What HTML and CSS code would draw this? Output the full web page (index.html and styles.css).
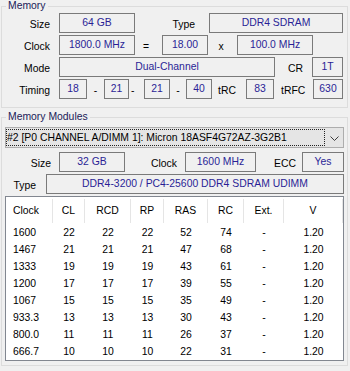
FILE: index.html
```html
<!DOCTYPE html>
<html>
<head>
<meta charset="utf-8">
<link rel="stylesheet" href="styles.css">
</head>
<body>
<fieldset class="grp mem">
  <legend>Memory</legend>
  <div class="row first">
    <span class="lbl l0">Size</span>
    <span class="val v-size">64 GB</span>
    <span class="lbl l-type">Type</span>
    <span class="val v-type">DDR4 SDRAM</span>
  </div>
  <div class="row">
    <span class="lbl l0">Clock</span>
    <span class="val v-size">1800.0 MHz</span>
    <span class="lbl eq">=</span>
    <span class="val v-mult">18.00</span>
    <span class="lbl x">x</span>
    <span class="val v-bus">100.0 MHz</span>
  </div>
  <div class="row">
    <span class="lbl l0">Mode</span>
    <span class="val v-mode">Dual-Channel</span>
    <span class="lbl l-cr">CR</span>
    <span class="val v-cr">1T</span>
  </div>
  <div class="row">
    <span class="lbl l0">Timing</span>
    <span class="val v-t1">18</span>
    <span class="lbl dash d1">-</span>
    <span class="val v-t2">21</span>
    <span class="lbl dash d2">-</span>
    <span class="val v-t3">21</span>
    <span class="lbl dash d3">-</span>
    <span class="val v-t3">40</span>
    <span class="lbl l-trc">tRC</span>
    <span class="val v-trc">83</span>
    <span class="lbl l-trfc">tRFC</span>
    <span class="val v-trfc">630</span>
  </div>
</fieldset>

<fieldset class="grp mods">
  <legend>Memory Modules</legend>
  <div class="combo">
    <div class="sel">#2 [P0 CHANNEL A/DIMM 1]: Micron 18ASF4G72AZ-3G2B1</div>
    <div class="arrow"><svg width="9" height="5" viewBox="0 0 9 5"><polyline points="0.5,0.5 4.5,4.5 8.5,0.5" fill="none" stroke="#3c3c3c" stroke-width="1"/></svg></div>
  </div>
  <div class="row r-size">
    <span class="lbl l2-size">Size</span>
    <span class="val v2-size">32 GB</span>
    <span class="lbl l2-clock">Clock</span>
    <span class="val v2-clock">1600 MHz</span>
    <span class="lbl l2-ecc">ECC</span>
    <span class="val v2-ecc">Yes</span>
  </div>
  <div class="row r-type">
    <span class="lbl l2-type">Type</span>
    <span class="val v2-type">DDR4-3200 / PC4-25600 DDR4 SDRAM UDIMM</span>
  </div>
  <div class="panel">
    <div class="lv head">
      <div class="c first">Clock</div><div class="c">CL</div><div class="c">RCD</div><div class="c">RP</div><div class="c">RAS</div><div class="c">RC</div><div class="c">Ext.</div><div class="c">V</div>
    </div>
    <div class="lv body">
      <div class="c first">1600</div><div class="c">22</div><div class="c">22</div><div class="c">22</div><div class="c">52</div><div class="c">74</div><div class="c">-</div><div class="c">1.20</div>
      <div class="c first">1467</div><div class="c">21</div><div class="c">21</div><div class="c">21</div><div class="c">47</div><div class="c">68</div><div class="c">-</div><div class="c">1.20</div>
      <div class="c first">1333</div><div class="c">19</div><div class="c">19</div><div class="c">19</div><div class="c">43</div><div class="c">61</div><div class="c">-</div><div class="c">1.20</div>
      <div class="c first">1200</div><div class="c">17</div><div class="c">17</div><div class="c">17</div><div class="c">39</div><div class="c">55</div><div class="c">-</div><div class="c">1.20</div>
      <div class="c first">1067</div><div class="c">15</div><div class="c">15</div><div class="c">15</div><div class="c">35</div><div class="c">49</div><div class="c">-</div><div class="c">1.20</div>
      <div class="c first">933.3</div><div class="c">13</div><div class="c">13</div><div class="c">13</div><div class="c">30</div><div class="c">43</div><div class="c">-</div><div class="c">1.20</div>
      <div class="c first">800.0</div><div class="c">11</div><div class="c">11</div><div class="c">11</div><div class="c">26</div><div class="c">37</div><div class="c">-</div><div class="c">1.20</div>
      <div class="c first">666.7</div><div class="c">10</div><div class="c">10</div><div class="c">10</div><div class="c">22</div><div class="c">31</div><div class="c">-</div><div class="c">1.20</div>
    </div>
  </div>
</fieldset>
</body>
</html>
```
FILE: styles.css
```css
html, body {
  margin: 0;
  padding: 0;
}
body {
  width: 350px;
  height: 371px;
  overflow: hidden;
  background: #f0f0f0;
  font-family: "Liberation Sans", Arial, sans-serif;
  font-size: 10.4px;
  color: #000;
}

.grp {
  box-sizing: border-box;
  width: 347px;
  margin: 0 0 0 1px;
  border: 1px solid #dcdcdc;
  min-width: 0;
}
.grp legend {
  height: 12px;
  line-height: 12px;
  padding: 0 2px;
  color: #1a2058;
}
.mem {
  padding: 1px 0 8px 0;
}
.mem legend {
  margin-left: 4px;
}
.mods {
  margin-top: 3px;
  padding: 0 3px 4px 3px;
}
.mods legend {
  margin-left: 1px;
}

.row {
  display: flex;
  align-items: center;
  height: 20px;
}
.mem .row + .row {
  margin-top: 2px;
}
.lbl {
  padding-top: 2px;
  white-space: nowrap;
  box-sizing: border-box;
}
.val {
  box-sizing: border-box;
  height: 20px;
  border: 1px solid #7a7a7a;
  line-height: 18px;
  text-align: center;
  color: #2a1f96;
  white-space: nowrap;
  overflow: hidden;
}

/* Memory group */
.l0 { width: 48px; text-align: right; }
.v-size { margin-left: 9px; width: 76px; }
.l-type { width: 60px; text-align: right; }
.v-type { margin-left: 14px; width: 134px; }
.eq { width: 22px; text-align: center; }
.v-mult { margin-left: 5px; width: 46px; }
.x { width: 26px; margin-right: 3px; text-align: center; }
.v-bus { width: 76px; }
.v-mode { margin-left: 9px; width: 216px; }
.l-cr { width: 28px; text-align: right; }
.v-cr { margin-left: 9px; width: 31px; }
.v-t1 { margin-left: 9px; width: 28px; }
.dash { text-align: center; }
.d1 { width: 17px; }
.d2 { width: 15px; text-align: left; padding-left: 2px; }
.d3 { width: 16px; }
.v-t2 { width: 25px; }
.v-t3 { width: 26px; }
.l-trc { width: 34px; padding-left: 6px; }
.v-trc { width: 28px; }
.l-trfc { width: 39px; padding-left: 7px; }
.v-trfc { width: 30px; }

/* Modules group */
.combo {
  box-sizing: border-box;
  margin-top: 4px;
  height: 21px;
  border: 1px solid #adadad;
  background: #e5e5e5;
  display: flex;
}
.sel {
  box-sizing: border-box;
  width: 319px;
  margin: 1px 0;
  border: 1px dotted #222;
  line-height: 15px;
  padding-left: 0;
  white-space: nowrap;
  overflow: hidden;
}
.arrow {
  flex: 1;
  display: flex;
  align-items: center;
  justify-content: center;
  padding-top: 1px;
}
.arrow svg { display: block; }

.r-size { margin-top: 4px; }
.r-type { margin-top: 2px; }
.l2-size { width: 46px; text-align: right; }
.v2-size { margin-left: 8px; width: 66px; }
.l2-clock { width: 52px; text-align: right; }
.v2-clock { margin-left: 8px; width: 71px; }
.l2-ecc { width: 40px; text-align: right; }
.v2-ecc { margin-left: 6px; width: 42px; }
.l2-type { width: 31px; text-align: right; }
.v2-type { margin-left: 10px; flex: 1; }

.panel {
  box-sizing: border-box;
  margin-top: 2px;
  border: 1px solid #828790;
  background: #fff;
}
.lv {
  display: grid;
  grid-template-columns: 47px 32px 46px 33px 44px 36px 40px 59px;
}
.lv .c {
  text-align: center;
  white-space: nowrap;
}
.lv .c.first {
  text-align: left;
  padding-left: 7px;
}
.head {
  padding-top: 2px;
}
.head .c {
  box-sizing: border-box;
  height: 24px;
  line-height: 24px;
  border-right: 1px solid #e5e5e5;
}
.body {
  padding-top: 1px;
}
.body .c {
  height: 17px;
  line-height: 17px;
}
```
